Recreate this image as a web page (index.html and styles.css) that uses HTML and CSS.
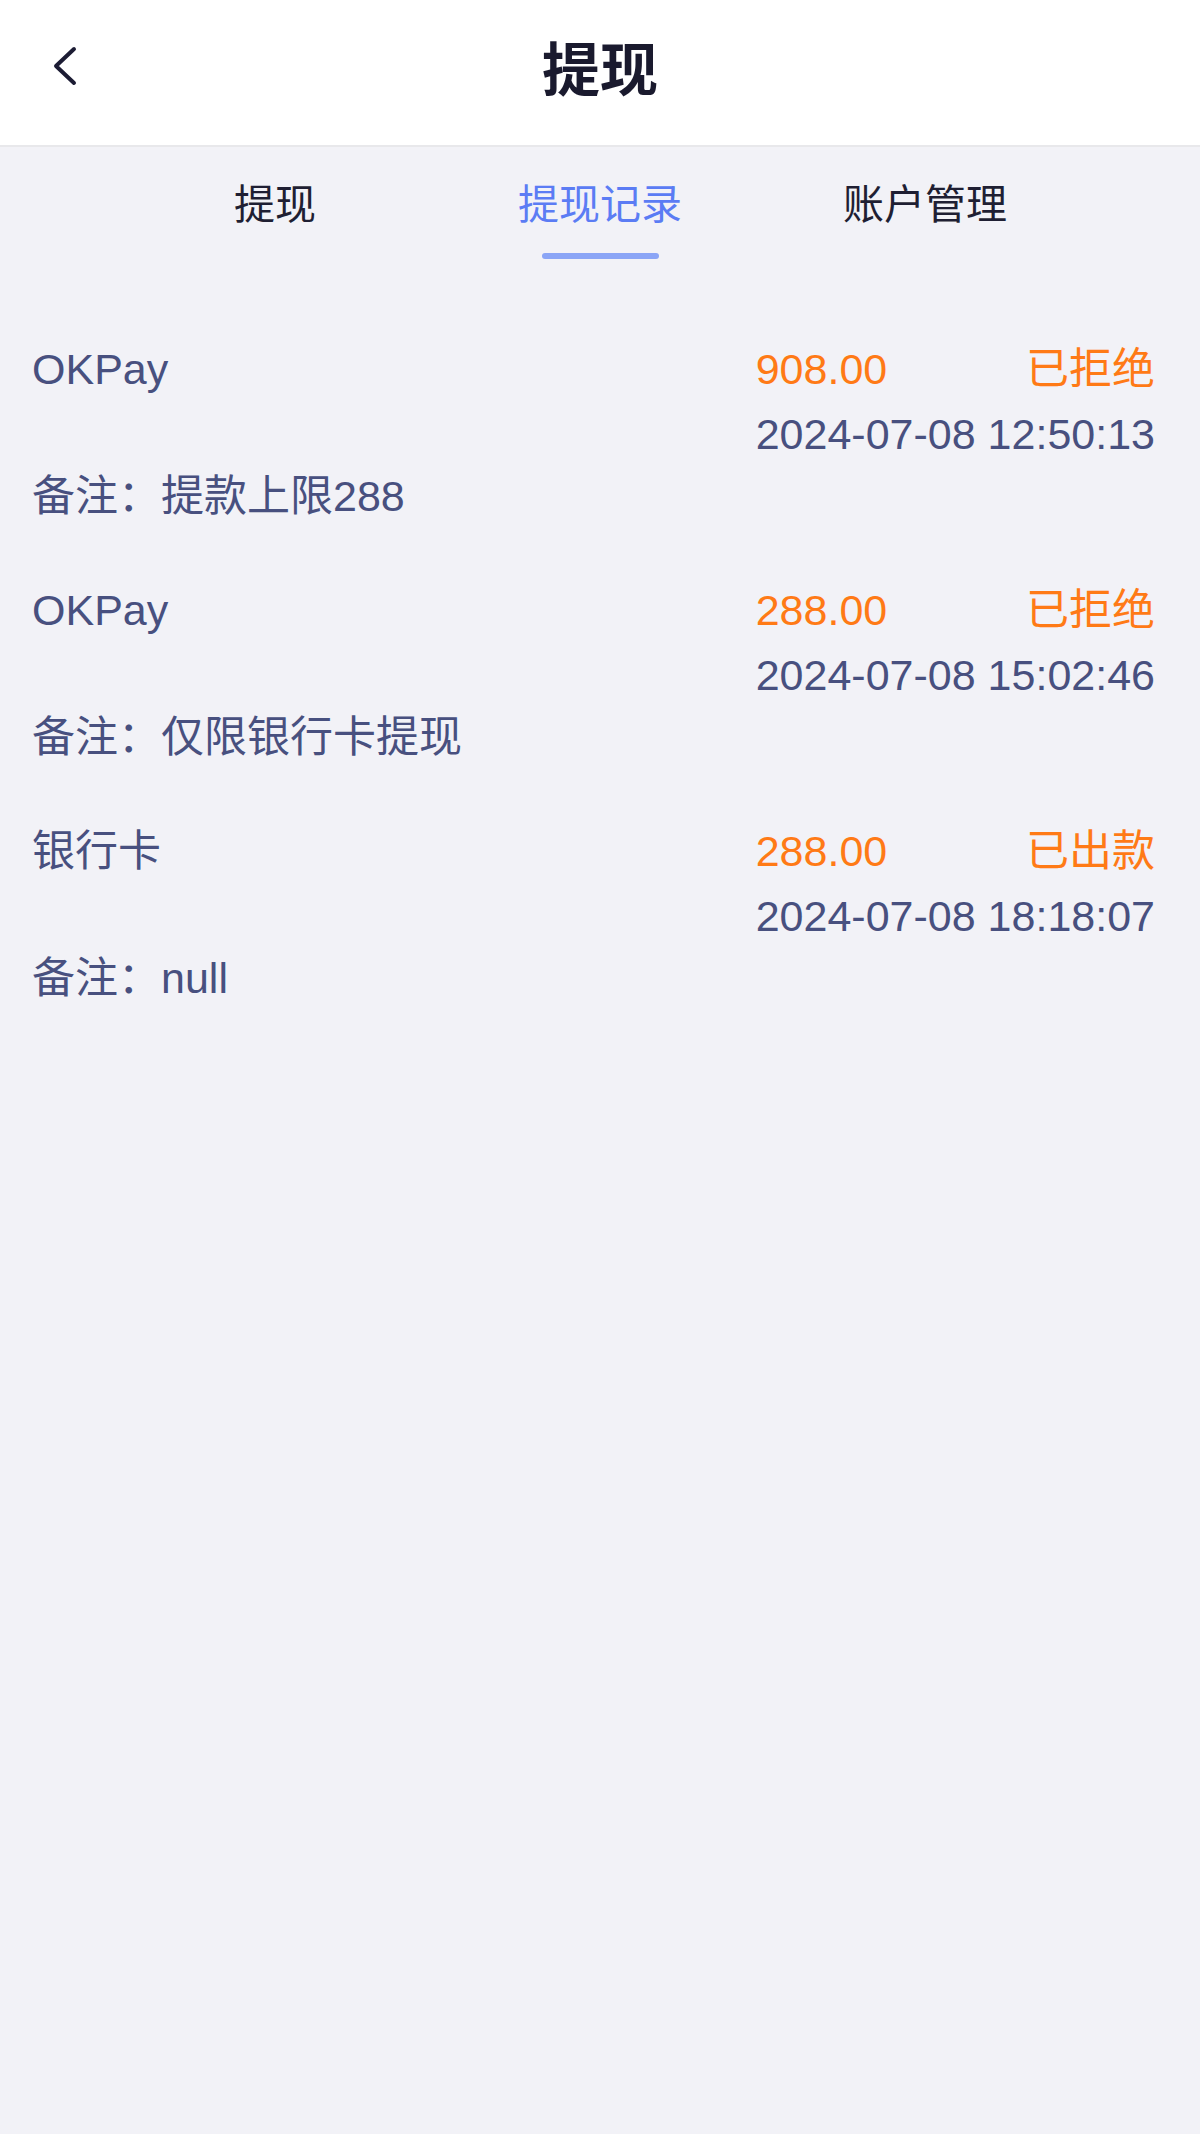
FILE: index.html
```html
<!DOCTYPE html>
<html lang="zh-CN">
  <head>
    <meta charset="UTF-8" />
    <meta name="viewport" content="width=device-width, initial-scale=1.0" />
    <title>提现记录</title>
    <link rel="stylesheet" href="styles.css">
  </head>
  <body>
    <header class="nav-bar">
      <a class="back-btn" href="#">
        <svg width="24" height="40" viewBox="0 0 24 40">
          <polyline points="21,3 3,20 21,37" fill="none" stroke="#1c1c34" stroke-width="4" stroke-linecap="round" stroke-linejoin="round" />
        </svg>
      </a>
      <h1 class="nav-title">提现</h1>
      <span></span>
    </header>

    <nav class="tabs">
      <div class="tab">提现</div>
      <div class="tab active">提现记录</div>
      <div class="tab">账户管理</div>
    </nav>

    <div class="records">
      <div class="record">
        <div class="record-head">
          <div class="method">OKPay</div>
          <div class="detail">
            <div class="detail-top">
              <span class="amount">908.00</span>
              <span class="status">已拒绝</span>
            </div>
            <div class="time">2024-07-08 12:50:13</div>
          </div>
        </div>
        <div class="note">备注：提款上限288</div>
      </div>

      <div class="record">
        <div class="record-head">
          <div class="method">OKPay</div>
          <div class="detail">
            <div class="detail-top">
              <span class="amount">288.00</span>
              <span class="status">已拒绝</span>
            </div>
            <div class="time">2024-07-08 15:02:46</div>
          </div>
        </div>
        <div class="note">备注：仅限银行卡提现</div>
      </div>

      <div class="record">
        <div class="record-head">
          <div class="method">银行卡</div>
          <div class="detail">
            <div class="detail-top">
              <span class="amount">288.00</span>
              <span class="status">已出款</span>
            </div>
            <div class="time">2024-07-08 18:18:07</div>
          </div>
        </div>
        <div class="note">备注：null</div>
      </div>
    </div>
  </body>
</html>
```

FILE: styles.css
```css
body {
  margin: 0;
  padding: 0;
  min-height: 2134px;
  background-color: #f2f2f7;
  font-family: "Liberation Sans", "Noto Sans CJK SC", sans-serif;
}

.nav-bar {
  display: grid;
  grid-template-columns: 1fr auto 1fr;
  align-items: center;
  height: 147px;
  padding-bottom: 14px;
  box-sizing: border-box;
  background-color: #ffffff;
  border-bottom: 2px solid #e8e8eb;
}

.back-btn {
  display: flex;
  justify-self: start;
  margin-left: 53px;
}

.nav-title {
  margin: 0;
  font-family: "Noto Sans CJK SC", sans-serif;
  font-size: 58px;
  font-weight: bold;
  line-height: 70px;
  color: #1a1a2e;
}

.tabs {
  display: grid;
  grid-template-columns: repeat(3, 325px);
  justify-content: center;
  padding-top: 26px;
  padding-bottom: 1px;
}

.tab {
  display: flex;
  flex-direction: column;
  align-items: center;
  font-family: "Noto Sans CJK SC", sans-serif;
  font-size: 41px;
  line-height: 56px;
  color: #1f1f33;
}

.tab::after {
  content: "";
  width: 117px;
  height: 6px;
  margin-top: 24px;
  border-radius: 3px;
}

.tab.active {
  color: #5b7cf4;
}

.tab.active::after {
  background-color: #8ba5f6;
}

.records {
  padding: 77px 45px 0 32px;
}

.record + .record {
  margin-top: 49px;
}

.record-head {
  display: flex;
  justify-content: space-between;
}

.method,
.time,
.note,
.amount,
.status {
  font-size: 43px;
  line-height: 65px;
}

.note {
  margin-top: -3px;
}

.method,
.time,
.note {
  color: #48507f;
}

.detail-top {
  display: flex;
  justify-content: space-between;
}

.amount,
.status {
  color: #ff7a16;
}
```
